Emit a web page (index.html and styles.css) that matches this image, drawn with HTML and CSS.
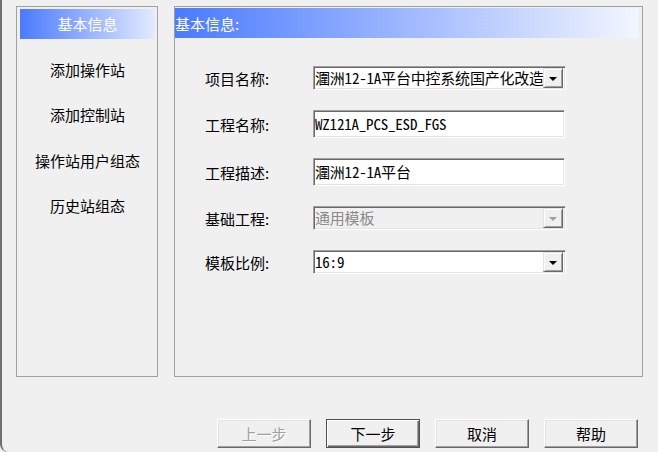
FILE: index.html
```html
<!DOCTYPE html>
<html lang="zh-CN">
<head>
<meta charset="utf-8">
<title>基本信息</title>
<link rel="stylesheet" href="styles.css">
</head>
<body>
<div class="window">
  <div class="main">
    <div class="nav">
      <div class="nav-item active">基本信息</div>
      <div class="nav-item">添加操作站</div>
      <div class="nav-item">添加控制站</div>
      <div class="nav-item">操作站用户组态</div>
      <div class="nav-item">历史站组态</div>
    </div>
    <div class="panel">
      <div class="panel-head">基本信息:</div>
      <div class="form">
        <div class="row row-combo">
          <span class="label">项目名称:</span>
          <div class="combo">
            <span class="field-text">潿洲12-1A平台中控系统国产化改造</span>
            <span class="combo-btn"><i class="tri"></i></span>
          </div>
        </div>
        <div class="row row-input">
          <span class="label">工程名称:</span>
          <div class="input"><span class="field-text">WZ121A_PCS_ESD_FGS</span></div>
        </div>
        <div class="row row-input">
          <span class="label">工程描述:</span>
          <div class="input"><span class="field-text">潿洲12-1A平台</span></div>
        </div>
        <div class="row row-combo">
          <span class="label">基础工程:</span>
          <div class="combo disabled">
            <span class="field-text">通用模板</span>
            <span class="combo-btn"><i class="tri"></i></span>
          </div>
        </div>
        <div class="row row-combo">
          <span class="label">模板比例:</span>
          <div class="combo">
            <span class="field-text">16:9</span>
            <span class="combo-btn"><i class="tri"></i></span>
          </div>
        </div>
      </div>
    </div>
  </div>
  <div class="buttons">
    <div class="btn disabled">上一步</div>
    <div class="btn default">下一步</div>
    <div class="btn">取消</div>
    <div class="btn">帮助</div>
  </div>
</div>
</body>
</html>
```

FILE: styles.css
```css
html, body {
  margin: 0;
  padding: 0;
  background: #f0f0f0;
}

body {
  width: 658px;
  height: 452px;
  overflow: hidden;
  font-family: "Noto Sans CJK SC", "Noto Sans", sans-serif;
  font-size: 15px;
  color: #000;
}

.window {
  box-sizing: border-box;
  width: 658px;
  height: 452px;
  border-left: 2px solid #6e6e6e;
  border-bottom-left-radius: 8px;
  padding: 6px 0 0 14px;
}

.main {
  display: flex;
  gap: 16px;
  height: 371px;
}

.nav {
  box-sizing: border-box;
  width: 142px;
  height: 371px;
  border: 1px solid #a0a0a0;
  padding: 2px 2px 0 3px;
  display: flex;
  flex-direction: column;
  gap: 15.5px;
}

.nav-item {
  height: 30px;
  display: flex;
  align-items: center;
  justify-content: center;
  line-height: 1;
  padding-bottom: 1px;
  box-sizing: border-box;
}

.nav-item.active {
  background: linear-gradient(to right, #4a7afe, #e4ebff);
  color: #fff;
}

.panel {
  box-sizing: border-box;
  width: 469px;
  height: 371px;
  border: 1px solid #a0a0a0;
  padding-top: 1px;
}

.panel-head {
  height: 30px;
  margin-right: 4px;
  background: linear-gradient(to right, #4a7afe, #f3f6ff);
  color: #fff;
  display: flex;
  align-items: center;
  line-height: 1;
}

.form {
  padding: 28px 0 0 30px;
  display: flex;
  flex-direction: column;
  gap: 20px;
}

.row {
  display: flex;
  align-items: center;
}

.row-combo { height: 24px; }
.row-input { height: 28px; }

.label {
  width: 108px;
  line-height: 1;
}

.combo, .input {
  box-sizing: border-box;
  display: flex;
  align-items: center;
  background: #fff;
  border: 1px solid;
  border-color: #a0a0a0 #ffffff #ffffff #a0a0a0;
  box-shadow: inset 1px 1px #696969, inset -1px -1px #e3e3e3;
  padding: 0 2px 0 1px;
  overflow: hidden;
}

.combo {
  width: 253px;
  height: 24px;
}

.input {
  width: 252px;
  height: 28px;
}

.field-text {
  flex: 1;
  min-width: 0;
  white-space: nowrap;
  overflow: hidden;
  font-family: "Noto Sans Mono CJK SC", "Noto Sans CJK SC", "Liberation Mono", monospace;
  font-size: 15px;
  line-height: 22px;
  letter-spacing: -0.2px;
}

.combo-btn {
  box-sizing: border-box;
  flex: none;
  width: 20px;
  height: 20px;
  background: #f0f0f0;
  border: 1px solid;
  border-color: #e3e3e3 #696969 #696969 #e3e3e3;
  box-shadow: inset 1px 1px #ffffff, inset -1px -1px #a0a0a0;
  display: flex;
  align-items: center;
  justify-content: center;
}

.tri {
  width: 0;
  height: 0;
  border-left: 4px solid transparent;
  border-right: 4px solid transparent;
  border-top: 4px solid #000;
  margin-top: 1px;
}

.combo.disabled {
  background: #f0f0f0;
}

.combo.disabled .field-text {
  color: #8a8a8a;
}

.combo.disabled .tri {
  border-top-color: #a0a0a0;
}

.buttons {
  display: flex;
  justify-content: flex-end;
  gap: 15px;
  margin-top: 42px;
  padding-right: 20px;
}

.btn {
  box-sizing: border-box;
  width: 94px;
  height: 29px;
  display: flex;
  align-items: center;
  justify-content: center;
  background: #f0f0f0;
  border: 1px solid;
  border-color: #ffffff #696969 #696969 #ffffff;
  box-shadow: inset -1px -1px #a0a0a0, inset 1px 1px #e3e3e3;
  line-height: 1;
}

.btn.default {
  border-color: #505050;
  box-shadow: inset 1px 1px #ffffff, inset -1px -1px #696969, inset -2px -2px #a0a0a0;
}

.btn.disabled {
  color: #a0a0a0;
  text-shadow: 1px 1px #ffffff;
}
```
